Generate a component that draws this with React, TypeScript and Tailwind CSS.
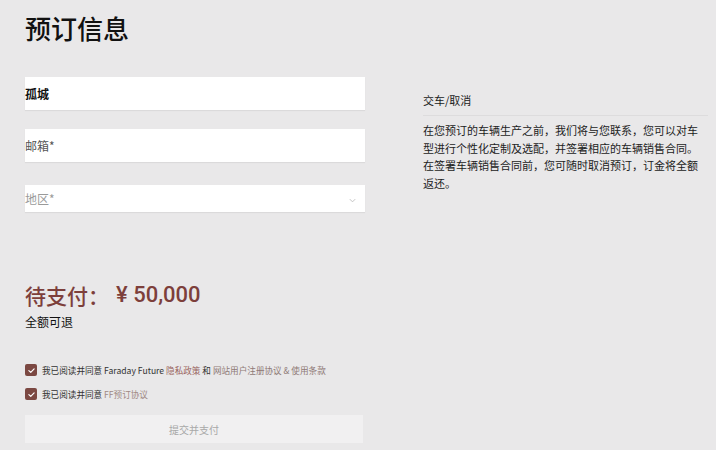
import React from 'react';

function Check() {
  return (
    <span className="flex h-[12px] w-[12px] shrink-0 items-center justify-center rounded-[2px] bg-[#7b4842]">
      <svg viewBox="0 0 12 12" className="h-[9px] w-[9px]" fill="none">
        <path d="M2.5 6.2 5 8.5 9.5 3.8" stroke="#fff" strokeWidth="1.6" strokeLinecap="round" strokeLinejoin="round" />
      </svg>
    </span>
  );
}

export default function App() {
  return (
    <div className="flex h-[450px] w-full overflow-hidden bg-[#e9e8e9] font-['Noto_Sans_CJK_SC',sans-serif] text-[#1a1a1a]">
      {/* Left: form */}
      <div className="ml-[25px] flex w-[340px] flex-col">
        <h1 className="mt-[8px] text-[26px] font-medium leading-[40px] text-[#111]">预订信息</h1>

        <div className="mt-[29px] flex h-[33px] items-center bg-white shadow-[0_1px_1px_rgba(0,0,0,0.06)]">
          <span className="text-[12px] font-bold text-[#111]">孤城</span>
        </div>

        <div className="mt-[19px] flex h-[33px] items-center bg-white shadow-[0_1px_1px_rgba(0,0,0,0.06)]">
          <span className="text-[12px] text-[#555]">邮箱*</span>
        </div>

        <div className="mt-[23px] flex h-[27px] items-center justify-between bg-white pr-[8px] shadow-[0_1px_1px_rgba(0,0,0,0.06)]">
          <span className="text-[12px] text-[#9a9a9a]">地区*</span>
          <svg viewBox="0 0 10 10" className="mt-[3px] h-[9px] w-[9px]" fill="none">
            <path d="M2 3.5 5 6.5 8 3.5" stroke="#bdbdbd" strokeWidth="1" />
          </svg>
        </div>

        <div className="mt-[69px] flex items-center text-[21px] font-medium leading-[28px] text-[#7d3f3b]">
          <span>待支付：</span>
          <span className="ml-[7px] font-['Roboto',sans-serif] text-[22px]">¥ 50,000</span>
        </div>
        <div className="mt-[5px] text-[12px] leading-[16px] text-[#111]">全额可退</div>

        <div className="mt-[32px] flex h-[16px] items-center gap-[5px] text-[8.6px] text-[#333]">
          <Check />
          <span>
            我已阅读并同意 Faraday Future <span className="text-[#9a6560]">隐私政策</span> 和{' '}
            <span className="text-[#8f7a77]">网站用户注册协议 &amp; 使用条款</span>
          </span>
        </div>
        <div className="mt-[8px] flex h-[16px] items-center gap-[5px] text-[8.6px] text-[#333]">
          <Check />
          <span>
            我已阅读并同意 <span className="text-[#a08884]">FF预订协议</span>
          </span>
        </div>

        <button className="mt-[13px] flex h-[28px] w-[338px] items-center justify-center bg-[#f1f0f1] text-[10px] text-[#a8a8a8]">
          提交并支付
        </button>
      </div>

      {/* Right: info */}
      <div className="ml-[58px] mt-[92px] flex w-[285px] flex-col">
        <div className="border-b border-[#dddcdd] pb-[7px] text-[11px] leading-[16px] text-[#222]">交车/取消</div>
        <p className="mt-[6px] text-[11px] leading-[17.6px] text-[#222]">
          在您预订的车辆生产之前，我们将与您联系，您可以对车
          <br />
          型进行个性化定制及选配，并签署相应的车辆销售合同。
          <br />
          在签署车辆销售合同前，您可随时取消预订，订金将全额
          <br />
          返还。
        </p>
      </div>
    </div>
  );
}
